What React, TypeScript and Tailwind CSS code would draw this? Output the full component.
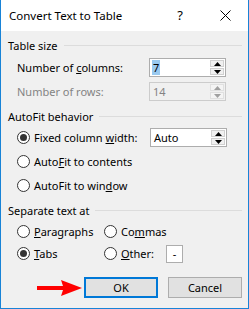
import React from "react";

function Radio({ checked }: { checked?: boolean }) {
  return (
    <span className="w-[13px] h-[13px] rounded-full border border-[#333333] bg-white flex items-center justify-center shrink-0">
      {checked && <span className="w-[7px] h-[7px] rounded-full bg-[#333333]" />}
    </span>
  );
}

function Tri({ up, color }: { up?: boolean; color: string }) {
  return (
    <svg width="7" height="4" viewBox="0 0 7 4">
      {up ? <polygon points="0,4 7,4 3.5,0" fill={color} /> : <polygon points="0,0 7,0 3.5,4" fill={color} />}
    </svg>
  );
}

function SpinBox({ value, disabled, selected }: { value: string; disabled?: boolean; selected?: boolean }) {
  return (
    <div
      className={`w-[77px] h-[19px] border flex shrink-0 ${
        disabled ? "border-[#cccccc] bg-[#f0f0f0] text-[#838383]" : "border-[#adadad] bg-white text-black"
      }`}
    >
      <div className="flex-1 pl-[2px] flex items-center">
        <span className={selected ? "bg-[#99c9ef] px-[1px] leading-[15px]" : "px-[1px]"}>{value}</span>
      </div>
      <div className="w-[16px] flex flex-col p-[1px] gap-[1px]">
        <div className={`flex-1 border flex items-center justify-center ${disabled ? "border-[#e0e0e0] bg-[#f4f4f4]" : "border-[#d0d0d0] bg-[#f0f0f0]"}`}>
          <Tri up color={disabled ? "#a0a0a0" : "#000"} />
        </div>
        <div className={`flex-1 border flex items-center justify-center ${disabled ? "border-[#e0e0e0] bg-[#f4f4f4]" : "border-[#d0d0d0] bg-[#f0f0f0]"}`}>
          <Tri color={disabled ? "#a0a0a0" : "#000"} />
        </div>
      </div>
    </div>
  );
}

function Header({ label }: { label: string }) {
  return (
    <div className="flex items-center h-[18px] pl-[7px] pr-[6px]">
      <span>{label}</span>
      <div className="flex-1 h-px bg-[#dcdcdc] ml-[6px]" />
    </div>
  );
}

export default function App() {
  return (
    <div className="w-[249px] h-[309px] bg-[#f0f0f0] border-l border-r border-b border-[#1883d7] flex flex-col text-[11px] text-black font-['Noto_Sans',sans-serif] leading-none overflow-hidden">
      {/* title bar */}
      <div className="h-[31px] bg-white flex items-center shrink-0">
        <span className="ml-[8px] text-[11.5px]">Convert Text to Table</span>
        <span className="ml-auto mr-[37px] text-[13px]">?</span>
        <svg width="11" height="11" viewBox="0 0 11 11" className="mr-[17px]">
          <path d="M0.5 0.5 L10.5 10.5 M10.5 0.5 L0.5 10.5" stroke="#000" strokeWidth="1" />
        </svg>
      </div>

      <div className="mt-[5px]">
        <Header label="Table size" />
      </div>
      <div className="mt-[4px] flex items-center h-[19px] pl-[16px]">
        <span className="w-[132px]">
          Number of <u>c</u>olumns:
        </span>
        <SpinBox value="7" selected />
      </div>
      <div className="mt-[5px] flex items-center h-[19px] pl-[16px] text-[#838383]">
        <span className="w-[132px]">Number of rows:</span>
        <SpinBox value="14" disabled />
      </div>

      <div className="mt-[6px]">
        <Header label="AutoFit behavior" />
      </div>
      <div className="mt-[3px] flex items-center h-[19px] pl-[16px]">
        <Radio checked />
        <span className="ml-[4px] w-[116px]">
          Fixed column <u>w</u>idth:
        </span>
        <SpinBox value="Auto" />
      </div>
      <div className="mt-[5px] flex items-center h-[19px] pl-[16px]">
        <Radio />
        <span className="ml-[4px]">
          Auto<u>F</u>it to contents
        </span>
      </div>
      <div className="mt-[5px] flex items-center h-[19px] pl-[16px]">
        <Radio />
        <span className="ml-[4px]">
          AutoFit to win<u>d</u>ow
        </span>
      </div>

      <div className="mt-[6px]">
        <Header label="Separate text at" />
      </div>
      <div className="mt-[3px] flex items-center h-[19px] pl-[16px]">
        <Radio />
        <span className="ml-[4px] w-[70px]">
          <u>P</u>aragraphs
        </span>
        <Radio />
        <span className="ml-[4px]">
          Co<u>m</u>mas
        </span>
      </div>
      <div className="mt-[3px] flex items-center h-[19px] pl-[16px]">
        <Radio checked />
        <span className="ml-[4px] w-[70px]">
          <u>T</u>abs
        </span>
        <Radio />
        <span className="ml-[4px] w-[45px] whitespace-nowrap">
          <u>O</u>ther:
        </span>
        <div className="w-[17px] h-[18px] border border-[#adadad] bg-white flex items-center justify-center shrink-0">-</div>
      </div>

      <div className="mt-[14px] flex items-center h-[21px]">
        <svg width="46" height="16" viewBox="0 0 46 16" className="ml-[36px]">
          <polygon points="0,6 26,6 24,0 45,8 24,16 26,10 0,10" fill="#ff0000" />
        </svg>
        <button className="ml-[1px] w-[74px] h-[21px] border-2 border-[#0078d7] bg-[#e1e1e1] flex items-center justify-center">
          OK
        </button>
        <button className="ml-[10px] w-[74px] h-[21px] border border-[#adadad] bg-[#e1e1e1] flex items-center justify-center">
          Cancel
        </button>
      </div>
    </div>
  );
}
